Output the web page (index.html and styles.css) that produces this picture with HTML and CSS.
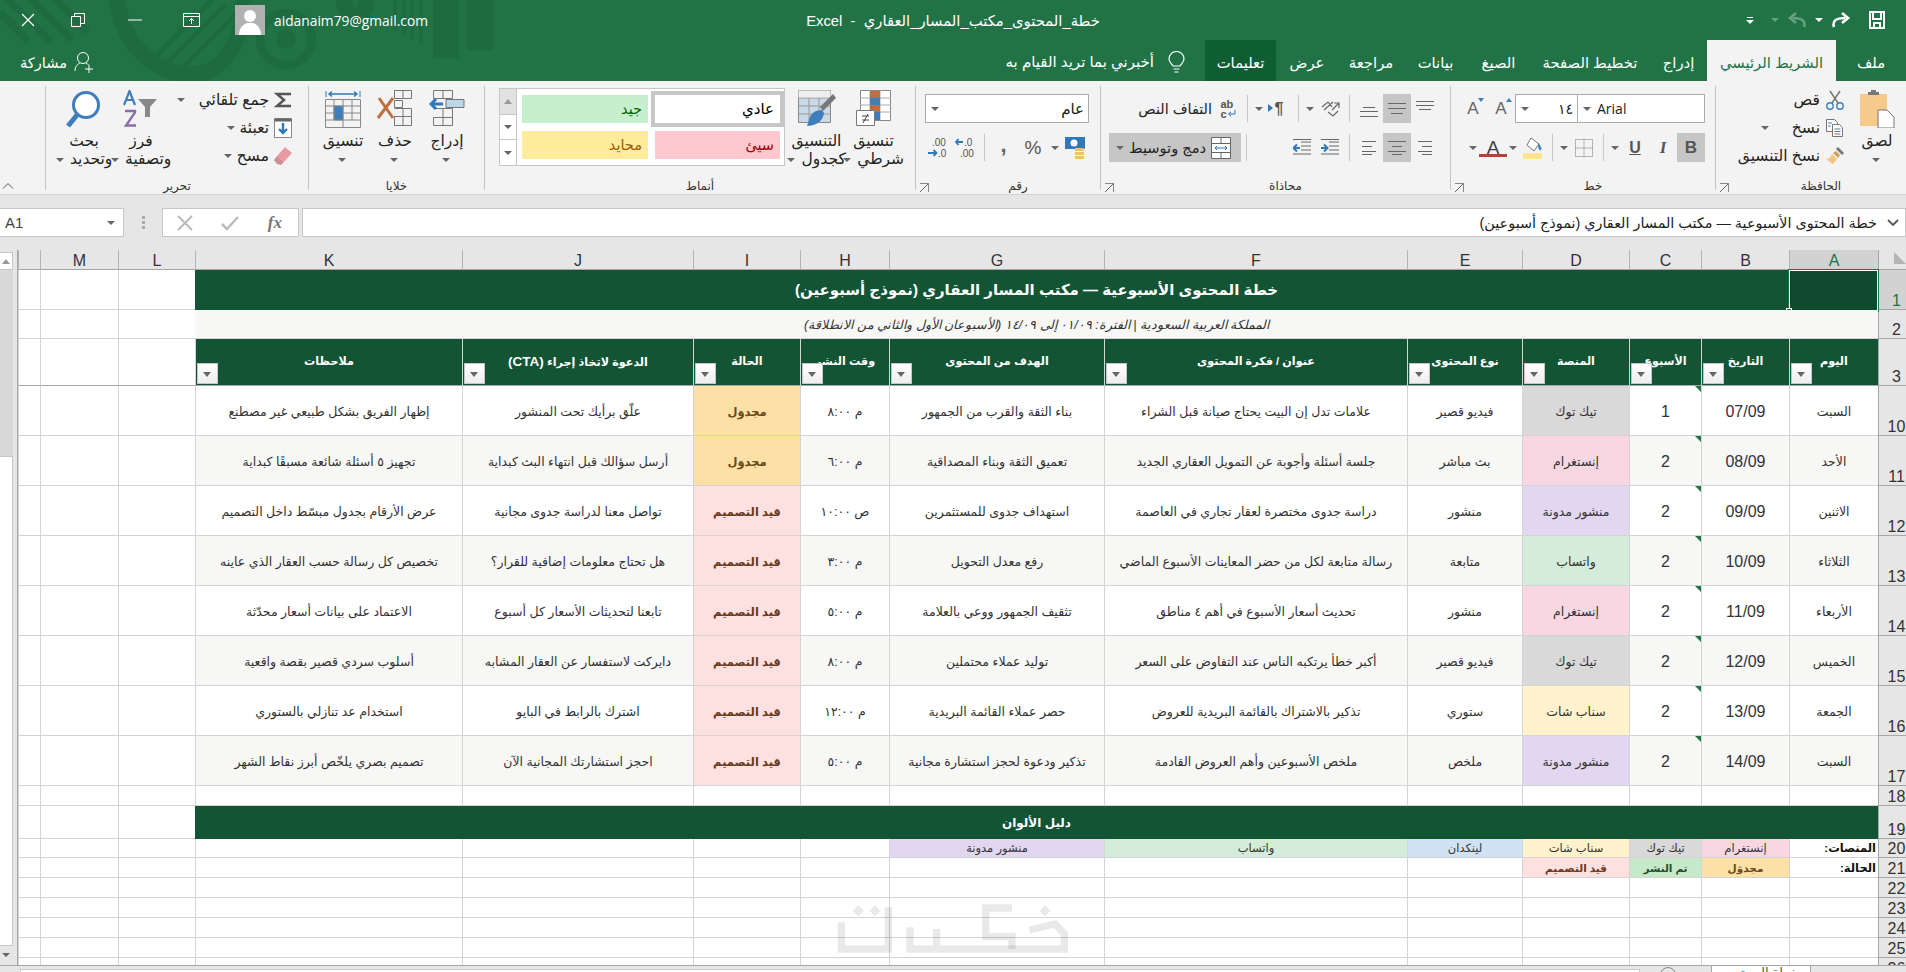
FILE: index.html
```html
<!DOCTYPE html>
<html lang="ar" dir="rtl">
<head>
  <meta charset="UTF-8">
  <title>خطة_المحتوى_مكتب_المسار_العقاري - Excel</title>
  <link rel="stylesheet" href="styles.css">
</head>
<body>

<section class="app">

  <!-- title bar + tab strip -->
  <header class="top">
    <svg class="top-deco" width="500" height="81" viewBox="0 0 500 81" fill="none" stroke="#1e6a41">
      <path d="M0 12L28 40M0 -8L52 42M22 -10L72 40M46 -10L88 32" stroke-width="7"/>
      <path d="M117 0C125 60 175 82 205 72C230 64 245 30 243 0" stroke-width="16"/>
      <path d="M150 62L212 0M162 68L226 4M176 74L240 10" stroke-width="5"/>
      <circle cx="286" cy="39" r="26" stroke-width="8"/>
      <circle cx="286" cy="39" r="10" fill="#1e6a41" stroke="none"/>
      <path d="M344 0C344 20 366 24 366 0" stroke-width="16"/>
      <path d="M395 0V30M404 0V36M412 0V40M421 0V44" stroke-width="4"/>
      <path d="M446 0V58M480 0V50" stroke-width="26"/>
    </svg>

    <div class="title-bar">
      <div class="qat">
        <svg class="qat-save" width="18" height="20" viewBox="0 0 18 20" fill="none" stroke="#fff" stroke-width="2"><path d="M2 2h14v16H2zM5 2v7h8V2M6 18v-5h6v5"/></svg>
        <svg class="qat-redo" width="20" height="18" viewBox="0 0 20 18" fill="none" stroke="#fff" stroke-width="2.6"><path d="M3 16C1 10 5 7 14 7"/><path d="M11 2l6 5-6 5"/></svg>
        <span class="caret caret-white qat-caret"></span>
        <svg class="qat-undo" width="20" height="18" viewBox="0 0 20 18" fill="none" stroke="#63a281" stroke-width="2.6"><path d="M17 16C19 10 15 7 6 7"/><path d="M9 2L3 7l6 5"/></svg>
        <span class="caret caret-dim qat-caret"></span>
        <svg class="qat-more" width="8" height="9" viewBox="0 0 8 9" fill="#fff"><path d="M1 1h6v1H1zM0 4h8L4 8z"/></svg>
      </div>
      <div class="doc-title">خطة_المحتوى_مكتب_المسار_العقاري&nbsp; - &nbsp;Excel</div>
      <div class="account">
        <span class="email">aidanaim79@gmail.com</span>
        <svg class="avatar" width="30" height="30" viewBox="0 0 30 30"><rect width="30" height="30" fill="#b1b1b1"/><circle cx="15" cy="11" r="6" fill="#fff"/><path d="M4 30c0-8 5-11 8-12h6c3 1 8 4 8 12z" fill="#fff"/></svg>
        <button class="win-btn"><svg width="18" height="15" viewBox="0 0 18 15" fill="none" stroke="#fff"><path d="M.5.5h16v13H.5zM.5 3.5h16M8.5 11V6M6 8l2.5-2.5L11 8"/></svg></button>
        <button class="win-btn"><svg width="14" height="2" viewBox="0 0 14 2" stroke="#fff"><path d="M0 1h14"/></svg></button>
        <button class="win-btn"><svg width="14" height="14" viewBox="0 0 14 14" fill="none" stroke="#fff"><path d="M.5 3.5h9v10h-9zM3.5 3.5v-3h10v10h-4"/></svg></button>
        <button class="win-btn win-close"><svg width="14" height="14" viewBox="0 0 14 14" fill="none" stroke="#fff" stroke-width="1.2"><path d="M1 1l12 12M13 1L1 13"/></svg></button>
      </div>
    </div>

    <nav class="tabs">
      <span class="tab">ملف</span>
      <span class="tab tab-active">الشريط الرئيسي</span>
      <span class="tab">إدراج</span>
      <span class="tab">تخطيط الصفحة</span>
      <span class="tab">الصيغ</span>
      <span class="tab">بيانات</span>
      <span class="tab">مراجعة</span>
      <span class="tab">عرض</span>
      <span class="tab tab-help">تعليمات</span>
      <span class="tell-me">
        <svg width="17" height="23" viewBox="0 0 17 23" fill="none" stroke="#fff" stroke-width="1.2"><path d="M5 15C3 12 1 11 1 8a7.5 7.5 0 0 1 15 0c0 3-2 4-4 7zM5.5 18h6M6.5 21h4"/></svg>
        أخبرني بما تريد القيام به
      </span>
      <span class="share">
        <svg width="20" height="22" viewBox="0 0 20 22" fill="none" stroke="#fff"><circle cx="9" cy="7" r="5.5"/><path d="M1 20c0-5 3-7 5-8M12 12c1 .5 2 1 2.5 2M15 14v8M11 18h8"/></svg>
        مشاركة
      </span>
    </nav>
  </header>

  <!-- ribbon -->
  <section class="ribbon">

    <div class="group group-clip">
      <div class="group-body row-top">
        <div class="large-btn btn-paste">
          <div class="large-ico">
            <svg width="36" height="38" viewBox="0 0 36 38"><path d="M1 4h27v32H1z" fill="#f6ca8a"/><path d="M9 5V2h3V0h5v2h3v3z" fill="#777"/><path d="M19 20h9l7 7v11H19z" fill="#fff" stroke="#777"/></svg>
          </div>
          <span class="lbl">لصق</span>
          <span class="lbl"><i class="caret"></i></span>
        </div>
        <div class="stack">
          <div class="small-btn">
            <svg width="20" height="20" viewBox="0 0 20 20" fill="none"><path d="M5 1l8 12M15 1L7 13" stroke="#777" stroke-width="1.5"/><circle cx="5" cy="16" r="3.2" stroke="#3d7ebb" stroke-width="1.4"/><circle cx="15" cy="16" r="3.2" stroke="#3d7ebb" stroke-width="1.4"/></svg>
            <span>قص</span>
          </div>
          <div class="small-btn">
            <svg width="20" height="20" viewBox="0 0 20 20" fill="none"><path d="M1.5 1.5h8l3 3v9h-11z" fill="#fff" stroke="#777"/><path d="M7.5 6.5h7l3 3v9h-10z" fill="#fff" stroke="#777"/><path d="M3 5h4M3 8h3M9.5 11h6M9.5 13.5h6M9.5 16h6" stroke="#3d7ebb"/></svg>
            <span>نسخ</span><i class="caret caret-gap"></i>
          </div>
          <div class="small-btn">
            <svg width="20" height="20" viewBox="0 0 20 20"><path d="M13 1l6 6-2 2-6-6z" fill="#777"/><path d="M11 5l4 4-2 3-5-5z" fill="#c9a160"/><path d="M7 8l5 5-4 5-7-5c3 0 5-2 6-5z" fill="#f2c57e"/></svg>
            <span>نسخ التنسيق</span>
          </div>
        </div>
      </div>
      <div class="group-label">الحافظة</div>
      <span class="launcher"></span>
    </div>

    <div class="group group-font">
      <div class="group-body two-rows">
        <div class="row">
          <span class="field field-font"><i class="caret"></i><span class="field-text">Arial</span></span>
          <span class="field field-size"><span>١٤</span><i class="caret"></i></span>
          <span class="ico font-step">A<i class="step-up"></i></span>
          <span class="ico font-step">A<i class="step-down"></i></span>
        </div>
        <div class="row">
          <span class="ico fmt fmt-b on">B</span>
          <span class="ico fmt fmt-i">I</span>
          <span class="ico fmt fmt-u">U</span>
          <span class="ico-caret"><i class="caret"></i></span>
          <span class="sep"></span>
          <span class="ico"><svg width="18" height="18" viewBox="0 0 18 18" fill="none" stroke="#777" stroke-dasharray="1 1"><path d="M.5.5h17v17H.5zM9 .5v17M.5 9h17"/></svg></span>
          <span class="ico-caret"><i class="caret"></i></span>
          <span class="sep"></span>
          <span class="ico"><svg width="20" height="22" viewBox="0 0 20 22"><path d="M8 1l8 6-5 7-7-6z" fill="#fff" stroke="#777"/><path d="M15 6c3 3 4 5 3 7-2 1-3-2-3-7z" fill="#3d7ebb"/><path d="M0 16h19v6H0z" fill="#ffe48e"/></svg></span>
          <span class="ico-caret"><i class="caret"></i></span>
          <span class="ico font-color">A</span>
          <span class="ico-caret"><i class="caret"></i></span>
        </div>
      </div>
      <div class="group-label">خط</div>
      <span class="launcher"></span>
    </div>

    <div class="group group-align">
      <div class="group-body two-rows">
        <div class="row">
          <span class="ico"><svg width="18" height="16" viewBox="0 0 18 16" stroke="#666"><path d="M0 .5h18M0 4.5h18M3 8.5h12"/></svg></span>
          <span class="ico on"><svg width="18" height="16" viewBox="0 0 18 16" stroke="#666"><path d="M0 2.5h18M0 7.5h18M3 12.5h12"/></svg></span>
          <span class="ico"><svg width="18" height="16" viewBox="0 0 18 16" stroke="#666"><path d="M3 6.5h12M0 10.5h18M0 15.5h18"/></svg></span>
          <span class="sep"></span>
          <span class="ico"><svg width="20" height="20" viewBox="0 0 20 20" fill="none" stroke="#666"><path d="M2 8l6-5 4 5M4 11l9-8M8 13l5 4 5-5M14 4h5v5M19 4l-7 7" stroke-width="1.2"/></svg></span>
          <span class="ico-caret"><i class="caret"></i></span>
          <span class="sep"></span>
          <span class="ico para">¶<i class="para-arrow"></i></span>
          <span class="ico-caret"><i class="caret"></i></span>
          <span class="sep"></span>
          <span class="ico wrap-ico"><span class="wrap-letters">ab<br>c<svg width="9" height="8" viewBox="0 0 9 8" fill="none" stroke="#2f78ba"><path d="M8 0v4H2M4 2L1.5 4 4 6"/></svg></span></span>
          <span class="small-text">التفاف النص</span>
        </div>
        <div class="row">
          <span class="ico"><svg width="14" height="14" viewBox="0 0 14 14" stroke="#666"><path d="M0 .5h14M4 5.5h10M0 10.5h14M4 13.5h10"/></svg></span>
          <span class="ico on"><svg width="18" height="14" viewBox="0 0 18 14" stroke="#666"><path d="M0 .5h18M4 5.5h10M0 10.5h18M4 13.5h10"/></svg></span>
          <span class="ico"><svg width="14" height="14" viewBox="0 0 14 14" stroke="#666"><path d="M0 .5h14M0 5.5h10M0 10.5h14M0 13.5h10"/></svg></span>
          <span class="sep"></span>
          <span class="ico"><svg width="18" height="18" viewBox="0 0 18 18" fill="none"><path d="M8 3h10M8 7h10M8 11h10M0 15h18M0 .5h18" stroke="#666"/><path d="M0 9h6M3 5.5L6.5 9 3 12.5" stroke="#2f78ba" stroke-width="2"/></svg></span>
          <span class="ico"><svg width="18" height="18" viewBox="0 0 18 18" fill="none"><path d="M8 3h10M8 7h10M8 11h10M0 15h18M0 .5h18" stroke="#666"/><path d="M7 9H1M4 5.5L.5 9 4 12.5" stroke="#2f78ba" stroke-width="2"/></svg></span>
          <span class="sep sep-far"></span>
          <span class="merge">
            <svg width="20" height="22" viewBox="0 0 20 22" fill="#fff" stroke="#666"><path d="M.5.5h19v21H.5zM.5 6.5h19M.5 15.5h19M10 .5v6M10 15.5v6"/><path d="M4 11h12M6 9l-2 2 2 2M14 9l2 2-2 2" fill="none" stroke="#2f78ba"/></svg>
            <span>دمج وتوسيط</span>
            <i class="caret"></i>
          </span>
        </div>
      </div>
      <div class="group-label">محاذاة</div>
      <span class="launcher"></span>
    </div>

    <div class="group group-number">
      <div class="group-body two-rows">
        <div class="row">
          <span class="field field-general"><span>عام</span><i class="caret"></i></span>
        </div>
        <div class="row">
          <span class="ico"><svg width="20" height="24" viewBox="0 0 20 24"><path d="M0 1h20v12H0z" fill="#2f78ba"/><circle cx="9" cy="7" r="3.5" fill="#fff"/><path d="M10 12h9v3h-9zM10 16h9v3h-9zM10 20h9v3h-9z" fill="#efc26b"/></svg></span>
          <span class="ico-caret"><i class="caret"></i></span>
          <span class="ico pct">%</span>
          <span class="ico comma">,</span>
          <span class="sep"></span>
          <span class="ico"><svg width="24" height="24" viewBox="0 0 24 24"><text x="11" y="10" class="dec-text">.0</text><text x="7" y="21" class="dec-text">.00</text><path d="M10 6H3M5.5 3L3 6l2.5 3" fill="none" stroke="#2f78ba" stroke-width="1.8"/></svg></span>
          <span class="ico"><svg width="24" height="24" viewBox="0 0 24 24"><text x="7" y="10" class="dec-text">.00</text><text x="13" y="21" class="dec-text">.0</text><path d="M3 17h8M8.5 14l3 3-3 3" fill="none" stroke="#2f78ba" stroke-width="1.8"/></svg></span>
        </div>
      </div>
      <div class="group-label">رقم</div>
      <span class="launcher"></span>
    </div>

    <div class="group group-styles">
      <div class="group-body row-top">
        <div class="large-btn btn-style">
          <div class="large-ico">
            <svg width="36" height="36" viewBox="0 0 36 36"><path d="M4.5.5h30v30h-30z" fill="#fff" stroke="#888"/><path d="M4 8h31M4 15h31M4 22h31M14 0v30M24 0v30" stroke="#aaa"/><path d="M14 1h10v7H14zM14 15h10v7H14z" fill="#bf6f3f"/><path d="M14 8h10v7H14zM14 22h10v8H14z" fill="#3d7ebb"/><path d="M.5 20.5h18v15H.5z" fill="#fff" stroke="#777"/><path d="M6 26h7M6 30h7M7 33l5-9" fill="none" stroke="#444"/></svg>
          </div>
          <span class="lbl">تنسيق</span>
          <span class="lbl">شرطي <i class="caret"></i></span>
        </div>
        <div class="large-btn btn-style">
          <div class="large-ico">
            <svg width="38" height="38" viewBox="0 0 38 38"><path d="M.5.5h32v32H.5z" fill="#c9d9e6" stroke="#888"/><path d="M.5 8h32M.5 16h32M.5 24h32M11 0v32M21 0v32" stroke="#999"/><path d="M.5.5h32v7H.5z" fill="#eee"/><path d="M22 17L35 4l3 4-13 13z" fill="#777"/><path d="M11 30c1-6 6-10 13-10l2 3c-1 8-8 13-17 13z" fill="#3d7ebb"/></svg>
          </div>
          <span class="lbl">التنسيق</span>
          <span class="lbl">كجدول <i class="caret"></i></span>
        </div>
        <div class="gallery">
          <div class="gallery-cells">
            <span class="style-cell style-normal">عادي</span>
            <span class="style-cell style-good">جيد</span>
            <span class="style-cell style-bad">سيئ</span>
            <span class="style-cell style-neutral">محايد</span>
          </div>
          <div class="gallery-scroll">
            <span class="gallery-btn gallery-up"><i class="caret caret-up"></i></span>
            <span class="gallery-btn"><i class="caret"></i></span>
            <span class="gallery-btn gallery-more"><i class="caret"></i></span>
          </div>
        </div>
      </div>
      <div class="group-label">أنماط</div>
    </div>

    <div class="group group-cells">
      <div class="group-body row-top">
        <div class="large-btn btn-cell">
          <div class="large-ico">
            <svg width="36" height="36" viewBox="0 0 36 36" fill="none" stroke="#777"><path d="M4.5.5h19v8h-19zM14 .5v8M4.5 27.5h19v8h-19zM4.5 18.5h19v9h-19M14 18.5v17"/><path d="M17 9.5h18v8H17z" fill="#bcd6ea"/><path d="M14 14H2M7 9l-5 5 5 5" stroke="#2f78ba" stroke-width="3"/></svg>
          </div>
          <span class="lbl">إدراج</span>
          <span class="lbl"><i class="caret"></i></span>
        </div>
        <div class="large-btn btn-cell">
          <div class="large-ico">
            <svg width="36" height="36" viewBox="0 0 36 36" fill="none" stroke="#777"><path d="M17.5.5h17v8h-17zM26 .5v8M17.5 26.5h17v9h-17zM17.5 18.5h17v8M26 18.5v17M17.5 10.5h8v7h-8z"/><path d="M2 8l14 20M16 8L1 28" stroke="#c0703f" stroke-width="3"/></svg>
          </div>
          <span class="lbl">حذف</span>
          <span class="lbl"><i class="caret"></i></span>
        </div>
        <div class="large-btn btn-cell">
          <div class="large-ico">
            <svg width="36" height="38" viewBox="0 0 36 38" fill="none" stroke="#888"><path d="M1 1v6M35 1v6" stroke="#2f78ba"/><path d="M4 4h28M7 1.5L4 4l3 2.5M29 1.5L32 4l-3 2.5" stroke="#2f78ba" stroke-width="1.5"/><path d="M.5 9.5h35v28H.5zM.5 16h35M.5 23h35M.5 30h35M9 9v21M18 9v28M27 9v21"/><path d="M9 16h9v14H9z" fill="#3d7ebb"/></svg>
          </div>
          <span class="lbl">تنسيق</span>
          <span class="lbl"><i class="caret"></i></span>
        </div>
      </div>
      <div class="group-label">خلايا</div>
    </div>

    <div class="group group-edit">
      <div class="group-body row-top">
        <div class="stack">
          <div class="small-btn">
            <svg width="18" height="16" viewBox="0 0 18 16" fill="none" stroke="#555" stroke-width="2.5"><path d="M17 2H3l7 6-7 6h14"/></svg>
            <span>جمع تلقائي</span><i class="caret caret-gap"></i>
          </div>
          <div class="small-btn">
            <svg width="18" height="20" viewBox="0 0 18 20"><path d="M.5.5h17v19H.5z" fill="#fff" stroke="#888"/><path d="M.5.5h17v3H.5z" fill="#666"/><path d="M9 5v10M5 11l4 4 4-4" fill="none" stroke="#2f78ba" stroke-width="2.4"/></svg>
            <span>تعبئة</span><i class="caret"></i>
          </div>
          <div class="small-btn">
            <svg width="18" height="20" viewBox="0 0 18 20"><path d="M11 1l7 6-8 9-7-6z" fill="#e79aa0"/><path d="M3 10l7 6-3 3-4-1-3-4z" fill="#cf8f90"/></svg>
            <span>مسح</span><i class="caret"></i>
          </div>
        </div>
        <div class="large-btn btn-sort">
          <div class="large-ico">
            <svg width="36" height="38" viewBox="0 0 36 38" fill="none"><path d="M1 15L6.5 1 12 15M3 10h7" stroke="#3d7ebb" stroke-width="2.2"/><path d="M2 21h10v1.5L3 35.5h10" stroke="#8a6ea8" stroke-width="2.4"/><path d="M15 9h19l-7 8v10h-5V17z" fill="#888"/></svg>
          </div>
          <span class="lbl">فرز</span>
          <span class="lbl">وتصفية <i class="caret"></i></span>
        </div>
        <div class="large-btn btn-find">
          <div class="large-ico">
            <svg width="36" height="38" viewBox="0 0 36 38" fill="none" stroke="#3d7ebb"><circle cx="20" cy="15" r="12.5" stroke-width="3" fill="#fff"/><path d="M11 25L2 36" stroke-width="5"/></svg>
          </div>
          <span class="lbl">بحث</span>
          <span class="lbl">وتحديد <i class="caret"></i></span>
        </div>
      </div>
      <div class="group-label">تحرير</div>
    </div>

    <div class="ribbon-tail">
      <svg width="12" height="7" viewBox="0 0 12 7" fill="none" stroke="#555"><path d="M1 6.5l5-5 5 5"/></svg>
    </div>
  </section>

  <!-- formula bar -->
  <section class="formula-bar">
    <div class="formula-input">
      <svg width="12" height="8" viewBox="0 0 12 8" fill="none" stroke="#555" stroke-width="1.8"><path d="M1 1l5 5 5-5"/></svg>
      <span>خطة المحتوى الأسبوعية — مكتب المسار العقاري (نموذج أسبوعين)</span>
    </div>
    <div class="func-box">
      <span class="fx">fx</span>
      <svg width="18" height="16" viewBox="0 0 18 16" fill="none" stroke="#bbb" stroke-width="2.5"><path d="M1 9l5 5L17 2"/></svg>
      <svg width="16" height="16" viewBox="0 0 16 16" fill="none" stroke="#bbb" stroke-width="2"><path d="M1 1l14 14M15 1L1 15"/></svg>
    </div>
    <div class="bar-dots"><i></i><i></i><i></i></div>
    <div class="name-box"><i class="caret"></i><span>A1</span></div>
  </section>

  <!-- grid -->
  <section class="sheet">
    <table class="grid">
      <colgroup>
        <col class="c-head"><col class="c-a"><col class="c-b"><col class="c-c"><col class="c-d"><col class="c-e"><col class="c-f"><col class="c-g"><col class="c-h"><col class="c-i"><col class="c-j"><col class="c-k"><col class="c-l"><col class="c-m"><col class="c-n">
      </colgroup>
      <tr class="letters">
        <th class="corner"><svg width="12" height="12" viewBox="0 0 12 12"><path d="M0 0v12h12z" fill="#b5b5b5"/></svg></th>
        <th class="active-col">A</th><th>B</th><th>C</th><th>D</th><th>E</th><th>F</th><th>G</th><th>H</th><th>I</th><th>J</th><th>K</th><th>L</th><th>M</th><th></th>
      </tr>
      <tr class="r-title">
        <th class="active-row">1</th>
        <td colspan="11" class="banner">خطة المحتوى الأسبوعية — مكتب المسار العقاري (نموذج أسبوعين)
          <span class="selection"><i class="handle"></i></span>
        </td>
        <td></td><td></td><td></td>
      </tr>
      <tr class="r-sub">
        <th>2</th>
        <td colspan="11" class="subtitle">المملكة العربية السعودية | الفترة: ٠١/٠٩ إلى ١٤/٠٩ (الأسبوعان الأول والثاني من الانطلاقة)</td>
        <td></td><td></td><td></td>
      </tr>
      <tr class="r-head">
        <th>3</th>
        <td class="hd">اليوم<i class="filter"></i></td>
        <td class="hd">التاريخ<i class="filter"></i></td>
        <td class="hd">الأسبوع<i class="filter"></i></td>
        <td class="hd">المنصة<i class="filter"></i></td>
        <td class="hd">نوع المحتوى<i class="filter"></i></td>
        <td class="hd">عنوان / فكرة المحتوى<i class="filter"></i></td>
        <td class="hd">الهدف من المحتوى<i class="filter"></i></td>
        <td class="hd">وقت النشر<i class="filter"></i></td>
        <td class="hd">الحالة<i class="filter"></i></td>
        <td class="hd">الدعوة لاتخاذ إجراء <span class="cta">(CTA)</span><i class="filter"></i></td>
        <td class="hd">ملاحظات<i class="filter"></i></td>
        <td></td><td></td><td></td>
      </tr>
      <tr class="r-data">
        <th>10</th><td>السبت</td><td class="num">07/09</td><td class="num flag">1</td><td class="tiktok">تيك توك</td><td>فيديو قصير</td>
        <td>علامات تدل إن البيت يحتاج صيانة قبل الشراء</td><td>بناء الثقة والقرب من الجمهور</td><td>م ٨:٠٠</td><td class="sched">مجدوَل</td>
        <td>علّق برأيك تحت المنشور</td><td>إظهار الفريق بشكل طبيعي غير مصطنع</td><td class="out"></td><td class="out"></td><td class="out"></td>
      </tr>
      <tr class="r-data alt">
        <th>11</th><td>الأحد</td><td class="num">08/09</td><td class="num flag">2</td><td class="insta">إنستغرام</td><td>بث مباشر</td>
        <td>جلسة أسئلة وأجوبة عن التمويل العقاري الجديد</td><td>تعميق الثقة وبناء المصداقية</td><td>م ٦:٠٠</td><td class="sched">مجدوَل</td>
        <td>أرسل سؤالك قبل انتهاء البث كبداية</td><td>تجهيز ٥ أسئلة شائعة مسبقًا كبداية</td><td class="out"></td><td class="out"></td><td class="out"></td>
      </tr>
      <tr class="r-data">
        <th>12</th><td>الاثنين</td><td class="num">09/09</td><td class="num flag">2</td><td class="blog">منشور مدونة</td><td>منشور</td>
        <td>دراسة جدوى مختصرة لعقار تجاري في العاصمة</td><td>استهداف جدوى للمستثمرين</td><td>ص ١٠:٠٠</td><td class="design">قيد التصميم</td>
        <td>تواصل معنا لدراسة جدوى مجانية</td><td>عرض الأرقام بجدول مبسّط داخل التصميم</td><td class="out"></td><td class="out"></td><td class="out"></td>
      </tr>
      <tr class="r-data alt">
        <th>13</th><td>الثلاثاء</td><td class="num">10/09</td><td class="num flag">2</td><td class="whats">واتساب</td><td>متابعة</td>
        <td>رسالة متابعة لكل من حضر المعاينات الأسبوع الماضي</td><td>رفع معدل التحويل</td><td>م ٣:٠٠</td><td class="design">قيد التصميم</td>
        <td>هل تحتاج معلومات إضافية للقرار؟</td><td>تخصيص كل رسالة حسب العقار الذي عاينه</td><td class="out"></td><td class="out"></td><td class="out"></td>
      </tr>
      <tr class="r-data">
        <th>14</th><td>الأربعاء</td><td class="num">11/09</td><td class="num flag">2</td><td class="insta">إنستغرام</td><td>منشور</td>
        <td>تحديث أسعار الأسبوع في أهم ٤ مناطق</td><td>تثقيف الجمهور ووعي بالعلامة</td><td>م ٥:٠٠</td><td class="design">قيد التصميم</td>
        <td>تابعنا لتحديثات الأسعار كل أسبوع</td><td>الاعتماد على بيانات أسعار محدّثة</td><td class="out"></td><td class="out"></td><td class="out"></td>
      </tr>
      <tr class="r-data alt">
        <th>15</th><td>الخميس</td><td class="num">12/09</td><td class="num flag">2</td><td class="tiktok">تيك توك</td><td>فيديو قصير</td>
        <td>أكبر خطأ يرتكبه الناس عند التفاوض على السعر</td><td>توليد عملاء محتملين</td><td>م ٨:٠٠</td><td class="design">قيد التصميم</td>
        <td>دايركت لاستفسار عن العقار المشابه</td><td>أسلوب سردي قصير بقصة واقعية</td><td class="out"></td><td class="out"></td><td class="out"></td>
      </tr>
      <tr class="r-data">
        <th>16</th><td>الجمعة</td><td class="num">13/09</td><td class="num flag">2</td><td class="snap">سناب شات</td><td>ستوري</td>
        <td>تذكير بالاشتراك بالقائمة البريدية للعروض</td><td>حصر عملاء القائمة البريدية</td><td>م ١٢:٠٠</td><td class="design">قيد التصميم</td>
        <td>اشترك بالرابط في البايو</td><td>استخدام عد تنازلي بالستوري</td><td class="out"></td><td class="out"></td><td class="out"></td>
      </tr>
      <tr class="r-data alt">
        <th>17</th><td>السبت</td><td class="num">14/09</td><td class="num flag">2</td><td class="blog">منشور مدونة</td><td>ملخص</td>
        <td>ملخص الأسبوعين وأهم العروض القادمة</td><td>تذكير ودعوة لحجز استشارة مجانية</td><td>م ٥:٠٠</td><td class="design">قيد التصميم</td>
        <td>احجز استشارتك المجانية الآن</td><td>تصميم بصري يلخّص أبرز نقاط الشهر</td><td class="out"></td><td class="out"></td><td class="out"></td>
      </tr>
      <tr class="r-20"><th>18</th><td></td><td></td><td></td><td></td><td></td><td></td><td></td><td></td><td></td><td></td><td></td><td></td><td></td><td></td></tr>
      <tr class="r-legend">
        <th>19</th>
        <td colspan="11" class="banner banner-sm">دليل الألوان</td>
        <td></td><td></td><td></td>
      </tr>
      <tr class="r-19 small">
        <th>20</th><td class="key">المنصات:</td><td class="insta">إنستغرام</td><td class="tiktok">تيك توك</td><td class="snap">سناب شات</td><td class="linked">لينكدان</td><td class="whats">واتساب</td><td class="blog">منشور مدونة</td><td></td><td></td><td></td><td></td><td></td><td></td><td></td>
      </tr>
      <tr class="r-20 small">
        <th>21</th><td class="key">الحالة:</td><td class="sched">مجدوَل</td><td class="published">تم النشر</td><td class="design">قيد التصميم</td><td></td><td></td><td></td><td></td><td></td><td></td><td></td><td></td><td></td><td></td>
      </tr>
      <tr class="r-20"><th>22</th><td></td><td></td><td></td><td></td><td></td><td></td><td></td><td></td><td></td><td></td><td></td><td></td><td></td><td></td></tr>
      <tr class="r-20"><th>23</th><td></td><td></td><td></td><td></td><td></td><td></td><td></td><td></td><td></td><td></td><td></td><td></td><td></td><td></td></tr>
      <tr class="r-20"><th>24</th><td></td><td></td><td></td><td></td><td></td><td></td><td></td><td></td><td></td><td></td><td></td><td></td><td></td><td></td></tr>
      <tr class="r-20"><th>25</th><td></td><td></td><td></td><td></td><td></td><td></td><td></td><td></td><td></td><td></td><td></td><td></td><td></td><td></td></tr>
      <tr class="r-20"><th>26</th><td></td><td></td><td></td><td></td><td></td><td></td><td></td><td></td><td></td><td></td><td></td><td></td><td></td><td></td></tr>
    </table>

    <div class="v-scroll">
      <span class="v-btn"><i class="caret caret-up"></i></span>
      <span class="v-track"></span>
      <span class="v-thumb"></span>
      <span class="v-btn v-btn-down"><i class="caret"></i></span>
    </div>

    <!-- watermark -->
    <svg class="watermark" width="270" height="70" viewBox="0 0 810 210" fill="none" stroke="#000" stroke-opacity=".085" stroke-width="22">
      <path d="M628 108L705 90L733 120V165H490"/>
      <path d="M675 33l17 17-17 17-17-17z" fill="#000" fill-opacity=".085" stroke="none"/>
      <path d="M576 42H497V128H576V165"/>
      <path d="M490 165H270V100M350 165V105M205 40V165H64V85"/>
      <path d="M115 33l17 17-17 17-17-17zM165 33l17 17-17 17-17-17z" fill="#000" fill-opacity=".085" stroke="none"/>
    </svg>
  </section>

  <!-- sheet tabs strip, clipped by the window edge -->
  <footer class="sheet-tabs">
    <span class="sheet-tab">خطة المحتوى</span>
    <span class="new-sheet"></span>
    <span class="h-scroll"></span>
  </footer>

</section>

</body>
</html>
```

FILE: styles.css
```css
/* Excel window */
* {
  box-sizing: border-box;
}
html, body {
  margin: 0;
  height: 100%;
  overflow: hidden;
}
body {
  font-family: "Liberation Sans", "DejaVu Sans", sans-serif;
  font-size: 13px;
  color: #222;
  background: #e6e6e6;
}
.app {
  display: flex;
  flex-direction: column;
  height: 972px;
}
i {
  font-style: normal;
}
button {
  background: none;
  border: 0;
  padding: 0;
}

/* small triangle used all over the ribbon */
.caret {
  display: inline-block;
  width: 0;
  height: 0;
  border-left: 4px solid transparent;
  border-right: 4px solid transparent;
  border-top: 4px solid #666;
  vertical-align: middle;
}
.caret-white {
  border-top-color: #fff;
}
.caret-dim {
  border-top-color: #63a281;
}
.caret-up {
  border-top: 0;
  border-bottom: 5px solid #999;
}
.caret-gap {
  margin-right: 9px;
}

/* Title bar */
.top {
  position: relative;
  background: #217346;
  color: #fff;
  height: 81px;
  flex: none;
}
.top-deco {
  position: absolute;
  left: 0;
  top: 0;
}
.title-bar {
  position: relative;
  display: grid;
  grid-template-columns: 1fr auto 1fr;
  height: 40px;
  align-items: center;
}
.qat {
  display: flex;
  align-items: center;
  padding-right: 20px;
}
.qat-redo {
  margin-right: 17px;
}
.qat-caret {
  margin-right: 8px;
}
.qat-undo {
  margin-right: 8px;
}
.qat-more {
  margin-right: 17px;
}
.doc-title {
  font-size: 14.8px;
  white-space: nowrap;
}
.account {
  display: flex;
  align-items: center;
  justify-self: end;
}
.email {
  font-family: "Open Sans", sans-serif;
  font-size: 13.8px;
  direction: ltr;
  margin-left: 9px;
}
.avatar {
  margin-left: 15px;
}
.win-btn {
  width: 57px;
  height: 40px;
  display: flex;
  align-items: center;
  justify-content: center;
}
.win-close {
  width: 49px;
  padding-left: 7px;
}

/* Tabs */
.tabs {
  position: relative;
  display: grid;
  grid-template-columns: 70px 129px 57px 120px 63px 63px 66px 62px 71px 1fr auto;
  height: 41px;
}
.tab {
  display: flex;
  align-items: center;
  justify-content: center;
  font-size: 14.8px;
  white-space: nowrap;
  padding-top: 3px;
}
.tab-active {
  background: #f3f3f3;
  color: #217346;
}
.tab-help {
  background: #0f5e33;
}
.tell-me {
  display: flex;
  align-items: center;
  gap: 14px;
  padding-right: 20px;
  padding-top: 3px;
  font-size: 15px;
  white-space: nowrap;
}
.share {
  display: flex;
  align-items: center;
  gap: 7px;
  padding-left: 20px;
  padding-top: 3px;
  font-size: 14.6px;
}

/* Ribbon */
.ribbon {
  display: flex;
  height: 114px;
  flex: none;
  background: #f3f3f3;
  border-bottom: 1px solid #d4d4d4;
  padding-top: 5px;
  padding-bottom: 4px;
  white-space: nowrap;
}
.group {
  position: relative;
  display: flex;
  flex-direction: column;
  border-left: 1px solid #c4c4c4;
  flex: none;
}
.group-clip { width: 191px; }
.group-font { width: 265px; }
.group-align { width: 350px; }
.group-number { width: 185px; }
.group-styles { width: 431px; }
.group-cells { width: 176px; }
.group-edit { width: 263px; }
.ribbon-tail {
  flex: 1;
  display: flex;
  align-items: flex-end;
  padding: 0 0 1px 2px;
  justify-content: flex-end;
}
.group-body {
  flex: 1;
  min-height: 0;
}
.group-label {
  height: 19px;
  line-height: 19px;
  margin-bottom: -6px;
  font-size: 12px;
  text-align: center;
  color: #333;
  flex: none;
}
.group-clip .group-label,
.group-font .group-label,
.group-align .group-label,
.group-number .group-label {
  padding-left: 20px;
}
.launcher {
  position: absolute;
  left: 4px;
  bottom: -2px;
  width: 9px;
  height: 9px;
  border: 1px solid #888;
  border-width: 1px 1px 0 0;
  background: linear-gradient(135deg, transparent 45%, #666 45%, #666 55%, transparent 55%);
}
.row-top {
  display: flex;
}
.two-rows {
  display: flex;
  flex-direction: column;
  gap: 10px;
  padding-top: 8px;
}
.row {
  display: flex;
  align-items: center;
  height: 29px;
}
.group-font .two-rows { padding-right: 10px; }
.group-align .two-rows { padding-right: 11px; }
.group-number .two-rows { padding-right: 11px; }
.group-cells .row-top { padding-right: 11px; }
.group-styles .row-top { padding-right: 13px; }
.group-clip .row-top { padding-right: 5px; }
.group-edit .row-top { padding-right: 16px; }

.ico {
  width: 28px;
  height: 29px;
  display: flex;
  align-items: center;
  justify-content: center;
  flex: none;
}
.ico.on {
  background: #c6c6c6;
}
.ico-caret {
  width: 12px;
  display: flex;
  justify-content: center;
}
.sep {
  width: 1px;
  height: 27px;
  background: #c8c8c8;
  margin: 0 5px;
}
.sep-far {
  margin-right: 41px;
}
.small-text {
  font-size: 14.4px;
  margin-right: 2px;
}
.field {
  display: flex;
  align-items: center;
  height: 29px;
  background: #fff;
  border: 1px solid #ababab;
  font-size: 14px;
  padding: 0 4px 0 5px;
}
.field-font {
  width: 128px;
  flex-direction: row-reverse;
  justify-content: flex-start;
}
.field-text {
  font-family: "Open Sans", sans-serif;
  direction: ltr;
  margin-left: 6px;
}
.field-size {
  width: 62px;
  justify-content: space-between;
  border-right: 0;
}
.field-general {
  width: 164px;
  justify-content: space-between;
  font-size: 15px;
}
.font-step {
  position: relative;
  font-size: 17px;
  color: #666;
}
.step-up, .step-down {
  position: absolute;
  top: 4px;
  right: 3px;
  width: 0;
  height: 0;
  border-left: 3px solid transparent;
  border-right: 3px solid transparent;
}
.step-up {
  border-bottom: 4px solid #3d7ebb;
}
.step-down {
  border-top: 4px solid #3d7ebb;
}
.fmt {
  font-size: 17px;
  color: #555;
  font-weight: bold;
}
.fmt-i {
  font-style: italic;
  font-family: "Liberation Serif", serif;
}
.fmt-u {
  text-decoration: underline;
  font-size: 16px;
}
.font-color {
  font-size: 19px;
  color: #444;
  box-shadow: inset 0 -5px 0 #f3f3f3, inset 0 -8px 0 #a5473a;
}
.para {
  position: relative;
  font-size: 16px;
  color: #555;
  font-weight: bold;
}
.para-arrow {
  position: absolute;
  left: 3px;
  top: 10px;
  width: 0;
  height: 0;
  border-top: 4px solid transparent;
  border-bottom: 4px solid transparent;
  border-left: 5px solid #2f78ba;
}
.wrap-letters {
  font-size: 11px;
  line-height: 10px;
  color: #555;
  direction: ltr;
  text-align: left;
  font-weight: bold;
}
.merge {
  width: 132px;
  height: 29px;
  display: flex;
  align-items: center;
  gap: 5px;
  background: #c6c6c6;
  padding-right: 10px;
  font-size: 14.6px;
}
.pct {
  font-size: 19px;
  width: 32px;
  color: #555;
}
.comma {
  font-size: 22px;
  font-weight: bold;
  color: #666;
  width: 27px;
  padding-bottom: 6px;
}
.dec-text {
  font-family: "Liberation Sans", sans-serif;
  font-size: 10px;
  fill: #555;
  direction: ltr;
}

/* Large and small ribbon buttons */
.large-btn {
  display: flex;
  flex-direction: column;
  align-items: center;
  flex: none;
}
.large-ico {
  height: 46px;
  padding-top: 4px;
}
.lbl {
  height: 18px;
  line-height: 18px;
  font-size: 15.5px;
}
.lbl .caret {
  margin-right: 2px;
}
.btn-paste { width: 48px; }
.btn-style { width: 57px; }
.btn-cell { width: 52px; }
.btn-sort { width: 56px; }
.btn-find { width: 58px; }
.stack {
  display: flex;
  flex-direction: column;
}
.group-clip .stack {
  margin-right: 8px;
}
.group-clip .caret-gap {
  margin-right: 18px;
}
.group-edit .stack {
  width: 123px;
}
.small-btn {
  display: flex;
  align-items: center;
  height: 28px;
  gap: 5px;
  font-size: 15.5px;
}

/* Style gallery */
.gallery {
  display: flex;
  width: 286px;
  height: 78px;
  margin: 2px 3px 0 0;
  background: #fff;
  border: 1px solid #c6c6c6;
}
.gallery-cells {
  display: grid;
  grid-template-columns: 133px 126px;
  grid-template-rows: 36px 36px;
  column-gap: 3px;
  padding-top: 2px;
}
.style-cell {
  display: flex;
  align-items: center;
  padding-right: 6px;
  font-size: 14.5px;
  margin: 4px 0;
}
.style-normal {
  margin: 0;
  border: 4px solid #c6c6c6;
  color: #000;
  font-size: 15px;
}
.style-good {
  background: #c6efce;
  color: #006100;
}
.style-bad {
  background: #ffc7ce;
  color: #9c0006;
  margin: 4px 4px;
}
.style-neutral {
  background: #ffeb9c;
  color: #9c5700;
}
.gallery-scroll {
  width: 18px;
  margin-right: 5px;
  display: flex;
  flex-direction: column;
  border-right: 1px solid #c6c6c6;
}
.gallery-btn {
  flex: 1;
  display: flex;
  align-items: center;
  justify-content: center;
  border-bottom: 1px solid #c6c6c6;
}
.gallery-up {
  background: #e2e2e2;
}
.gallery-more {
  border-bottom: 0;
}

/* Formula bar */
.formula-bar {
  display: flex;
  height: 55px;
  flex: none;
  padding-top: 13px;
  padding-bottom: 13px;
  background: #e6e6e6;
}
.formula-input {
  flex: 1;
  display: flex;
  align-items: center;
  gap: 10px;
  padding-right: 6px;
  background: #fff;
  border: 1px solid #c6c6c6;
  font-size: 14.4px;
}
.func-box {
  width: 137px;
  display: flex;
  align-items: center;
  justify-content: space-between;
  padding: 0 16px 0 14px;
  margin-right: 3px;
  background: #fff;
  border: 1px solid #c6c6c6;
}
.fx {
  font-family: "Liberation Serif", serif;
  font-style: italic;
  font-weight: bold;
  font-size: 17px;
  color: #777;
  direction: ltr;
}
.bar-dots {
  width: 38px;
  display: flex;
  flex-direction: column;
  align-items: center;
  justify-content: center;
  gap: 2px;
}
.bar-dots i {
  width: 3px;
  height: 3px;
  background: #aaa;
}
.name-box {
  width: 124px;
  display: flex;
  align-items: center;
  justify-content: space-between;
  padding: 0 8px 0 5px;
  background: #fff;
  border: 1px solid #c6c6c6;
  border-left: 0;
  font-size: 15px;
  color: #444;
}

/* Sheet */
.sheet {
  position: relative;
  height: 716px;
  flex: none;
  display: flex;
  overflow: hidden;
  border-bottom: 1px solid #a6a6a6;
}
.grid {
  width: 1888px;
  table-layout: fixed;
  border-collapse: separate;
  border-spacing: 0;
  background: #fff;
  flex: none;
  align-self: flex-start;
  border-left: 1px solid #a6a6a6;
}
.c-head { width: 28px; }
.c-a { width: 89px; }
.c-b { width: 88px; }
.c-c { width: 72px; }
.c-d { width: 107px; }
.c-e { width: 115px; }
.c-f { width: 303px; }
.c-g { width: 215px; }
.c-h { width: 89px; }
.c-i { width: 107px; }
.c-j { width: 231px; }
.c-k { width: 267px; }
.c-l { width: 77px; }
.c-m { width: 78px; }
.c-n { width: 22px; }

.grid td, .grid th {
  padding: 0;
  text-align: center;
  white-space: nowrap;
  overflow: hidden;
}
.grid td {
  position: relative;
  border-left: 1px solid #d4d4d4;
  border-bottom: 1px solid #d4d4d4;
  font-size: 12.5px;
  color: #333;
}
.grid th {
  background: #e6e6e6;
  font-weight: normal;
  font-size: 16px;
  line-height: 16px;
  color: #333;
}
.grid tr > th:first-child {
  vertical-align: bottom;
  padding-left: 8px;
  border-bottom: 1px solid #a6a6a6;
  border-left: 1px solid #a6a6a6;
}
.letters {
  height: 20px;
}
.letters th {
  border-left: 1px solid #b4b4b4;
  border-bottom: 1px solid #a6a6a6;
  vertical-align: bottom;
}
.grid .letters .corner {
  padding: 0 0 3px 12px;
  vertical-align: middle;
  text-align: right;
  line-height: 0;
}
.grid .active-col {
  background: #d2d2d2;
  color: #217346;
}
.grid tr > .active-row {
  background: #d2d2d2;
  color: #217346;
}
.r-title { height: 40px; }
.r-sub { height: 29px; }
.r-head { height: 47px; }
.r-data { height: 50px; }
.r-legend { height: 33px; }
.r-19 { height: 19px; }
.r-20 { height: 20px; }

.r-data td {
  padding-top: 2px;
}
.grid .banner {
  background: #135435;
  color: #fff;
  border: 0;
  overflow: visible;
  font-size: 15px;
  font-weight: bold;
}
.grid .banner-sm {
  font-size: 12px;
}
.selection {
  position: absolute;
  right: 0;
  top: 0;
  bottom: -1px;
  width: 89px;
  background: #0f4a2e;
  border: 1px solid #fff;
  box-shadow: 0 0 0 1px #217346;
}
.handle {
  position: absolute;
  left: -4px;
  bottom: -4px;
  width: 6px;
  height: 6px;
  background: #217346;
  border: 1px solid #fff;
}
.grid .subtitle {
  background: #f7f7f5;
  font-style: italic;
  font-size: 12.6px;
  border-left: 0;
  color: #333;
}
.grid .hd {
  background: #135435;
  color: #fff;
  font-weight: bold;
  font-size: 11.2px;
  padding-bottom: 2px;
  border-left: 1px solid #d4d4d4;
  border-bottom: 1px solid #a6a6a6;
}
.cta {
  font-size: 13.5px;
}
.r-head td {
  border-bottom-color: #a6a6a6;
}
.filter {
  position: absolute;
  left: 1px;
  bottom: 1px;
  width: 21px;
  height: 21px;
  background: linear-gradient(#fff, #eee);
  border: 1px solid #c6c6c6;
}
.filter::after {
  content: "";
  position: absolute;
  left: 5px;
  top: 8px;
  border-left: 4px solid transparent;
  border-right: 4px solid transparent;
  border-top: 5px solid #666;
}
.alt td {
  background: #f7f7f5;
}
.alt td.out {
  background: #fff;
}
.grid .num {
  font-size: 16px;
  color: #333;
}
.flag::after {
  content: "";
  position: absolute;
  right: 0;
  top: 0;
  border-top: 6px solid #217346;
  border-left: 6px solid transparent;
}
.grid .tiktok { background: #d9d9d9; }
.grid .insta { background: #f8d7e3; }
.grid .blog { background: #e2d6f1; }
.grid .whats { background: #d4ecda; }
.grid .snap { background: #fff2cc; }
.grid .linked { background: #cfe2f3; }
.grid .sched {
  background: #fde0a6;
  font-weight: bold;
  font-size: 11.5px;
  color: #6a4a1c;
}
.grid .design {
  background: #fde0e0;
  font-weight: bold;
  font-size: 11.5px;
  color: #6a3a1c;
}
.grid .published {
  background: #c6e9c9;
  font-weight: bold;
  color: #24502f;
}
.grid .small td {
  font-size: 11.5px;
}
.grid .small .sched,
.grid .small .design,
.grid .small .published {
  font-size: 10.5px;
}
.grid .small .key {
  font-weight: bold;
  text-align: right;
  color: #111;
  padding-right: 2px;
}

/* Vertical scrollbar on the left of the sheet */
.v-scroll {
  width: 18px;
  flex: none;
  display: flex;
  flex-direction: column;
  padding-right: 4px;
  padding-top: 2px;
  padding-bottom: 1px;
}
.v-btn {
  height: 18px;
  flex: none;
  display: flex;
  align-items: center;
  justify-content: center;
  background: #fff;
  border: 1px solid #c6c6c6;
}
.v-btn-down {
  background: #e6e6e6;
  border: 0;
}
.v-track {
  height: 186px;
  flex: none;
  background: #d8d8d8;
}
.v-thumb {
  flex: 1;
  background: #fff;
  border: 1px solid #c6c6c6;
}
.watermark {
  position: absolute;
  left: 820px;
  bottom: 1px;
}

/* Sheet tabs */
.sheet-tabs {
  flex: 1;
  display: flex;
  overflow: hidden;
  padding-right: 95px;
  align-items: flex-start;
  background: #e6e6e6;
}
.sheet-tab {
  width: 100px;
  height: 20px;
  flex: none;
  background: #fff;
  border: 1px solid #a6a6a6;
  border-top: 0;
  text-align: center;
  color: #217346;
  font-size: 13px;
  line-height: 13px;
}
.new-sheet {
  width: 16px;
  height: 16px;
  flex: none;
  margin: 1px 35px 0 0;
  border: 1px solid #888;
  border-radius: 50%;
}
.h-scroll {
  flex: 1;
  height: 20px;
  margin: 3px 20px 0;
  background: #fff;
  border: 1px solid #c6c6c6;
}
```
